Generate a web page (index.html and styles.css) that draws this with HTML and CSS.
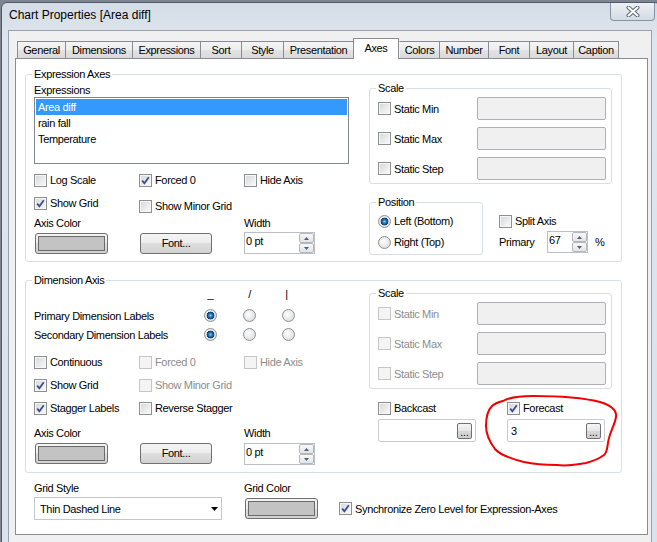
FILE: index.html
```html
<!DOCTYPE html>
<html>
<head>
<meta charset="utf-8">
<title>Chart Properties</title>
<link rel="stylesheet" href="styles.css">
</head>
<body>
<div class="win">
  <div class="titlebar">
    <span class="title">Chart Properties [Area diff]</span>
    <span class="close"><svg width="14" height="11" viewBox="0 0 14 11"><path d="M2.5 1.5 L11.5 9.5 M11.5 1.5 L2.5 9.5" stroke="#5d6673" stroke-width="4" stroke-linecap="round" fill="none"/><path d="M2.5 1.5 L11.5 9.5 M11.5 1.5 L2.5 9.5" stroke="#ffffff" stroke-width="2" stroke-linecap="round" fill="none"/></svg></span>
  </div>
  <div class="client">
    <div class="tabs">
      <div class="tab t-general">General</div>
      <div class="tab t-dims">Dimensions</div>
      <div class="tab t-exprs">Expressions</div>
      <div class="tab t-sort">Sort</div>
      <div class="tab t-style">Style</div>
      <div class="tab t-pres">Presentation</div>
      <div class="tab sel t-axes">Axes</div>
      <div class="tab t-colors">Colors</div>
      <div class="tab t-number">Number</div>
      <div class="tab t-font">Font</div>
      <div class="tab t-layout">Layout</div>
      <div class="tab last t-caption">Caption</div>
    </div>
    <div class="panel">
      <fieldset class="grp">
        <legend>Expression Axes</legend>
        <div class="cols">
          <div class="col-l">
            <div class="lbl exlbl">Expressions</div>
            <div class="list">
              <div class="item sel">Area diff</div>
              <div class="item">rain fall</div>
              <div class="item">Temperature</div>
            </div>
            <div class="row3 er1">
              <div class="chk"><span class="cb"></span>Log Scale</div>
              <div class="chk"><span class="cb"><svg width="11" height="11" viewBox="0 0 11 11"><path d="M2.2 5.6 L4.4 8.3 L8.8 2.2" stroke="#3b4e8e" stroke-width="1.8" fill="none"/></svg></span>Forced 0</div>
              <div class="chk"><span class="cb"></span>Hide Axis</div>
            </div>
            <div class="row3 er2">
              <div class="chk"><span class="cb"><svg width="11" height="11" viewBox="0 0 11 11"><path d="M2.2 5.6 L4.4 8.3 L8.8 2.2" stroke="#3b4e8e" stroke-width="1.8" fill="none"/></svg></span>Show Grid</div>
              <div class="chk low"><span class="cb"></span>Show Minor Grid</div>
            </div>
            <div class="row3 elabels">
              <div>Axis Color</div>
              <div></div>
              <div>Width</div>
            </div>
            <div class="ctrls ectrls">
              <div class="cbtn"><span></span></div>
              <div class="btn">Font...</div>
              <div class="spin w71">
                <span class="val">0 pt</span>
                <span class="arrows">
                  <span class="ab"><svg width="5" height="3" viewBox="0 0 5 3"><path d="M0 3 L2.5 0 L5 3 Z" fill="#4b5f80"/></svg></span>
                  <span class="ab"><svg width="5" height="3" viewBox="0 0 5 3"><path d="M0 0 L2.5 3 L5 0 Z" fill="#4b5f80"/></svg></span>
                </span>
              </div>
            </div>
          </div>
          <div class="col-r">
            <fieldset class="grp scale">
              <legend>Scale</legend>
              <div class="sgrid">
                <div class="chk"><span class="cb"></span>Static Min</div>
                <div class="tb"></div>
                <div class="chk"><span class="cb"></span>Static Max</div>
                <div class="tb"></div>
                <div class="chk"><span class="cb"></span>Static Step</div>
                <div class="tb"></div>
              </div>
            </fieldset>
            <div class="posrow">
              <fieldset class="grp pos">
                <legend>Position</legend>
                <div class="chk rad1"><span class="rb on"></span>Left (Bottom)</div>
                <div class="chk rad2"><span class="rb"></span>Right (Top)</div>
              </fieldset>
              <div class="split">
                <div class="chk splitchk"><span class="cb"></span>Split Axis</div>
                <div class="prim">
                  <span>Primary</span>
                  <div class="spin w41">
                    <span class="val">67</span>
                    <span class="arrows">
                      <span class="ab"><svg width="5" height="3" viewBox="0 0 5 3"><path d="M0 3 L2.5 0 L5 3 Z" fill="#4b5f80"/></svg></span>
                      <span class="ab"><svg width="5" height="3" viewBox="0 0 5 3"><path d="M0 0 L2.5 3 L5 0 Z" fill="#4b5f80"/></svg></span>
                    </span>
                  </div>
                  <span class="pct">%</span>
                </div>
              </div>
            </div>
          </div>
        </div>
      </fieldset>

      <fieldset class="grp dim">
        <legend>Dimension Axis</legend>
        <div class="cols">
          <div class="col-l">
            <div class="rgrid">
              <div></div>
              <div class="hd">_</div>
              <div class="hd">/</div>
              <div class="hd bar">|</div>
              <div>Primary Dimension Labels</div>
              <span class="rb on"></span>
              <span class="rb"></span>
              <span class="rb"></span>
              <div>Secondary Dimension Labels</div>
              <span class="rb on"></span>
              <span class="rb"></span>
              <span class="rb"></span>
            </div>
            <div class="row3 dr1">
              <div class="chk"><span class="cb"></span>Continuous</div>
              <div class="chk dis"><span class="cb"></span>Forced 0</div>
              <div class="chk dis"><span class="cb"></span>Hide Axis</div>
            </div>
            <div class="row3 dr2">
              <div class="chk"><span class="cb"><svg width="11" height="11" viewBox="0 0 11 11"><path d="M2.2 5.6 L4.4 8.3 L8.8 2.2" stroke="#3b4e8e" stroke-width="1.8" fill="none"/></svg></span>Show Grid</div>
              <div class="chk dis"><span class="cb"></span>Show Minor Grid</div>
            </div>
            <div class="row3 dr2">
              <div class="chk"><span class="cb"><svg width="11" height="11" viewBox="0 0 11 11"><path d="M2.2 5.6 L4.4 8.3 L8.8 2.2" stroke="#3b4e8e" stroke-width="1.8" fill="none"/></svg></span>Stagger Labels</div>
              <div class="chk"><span class="cb"></span>Reverse Stagger</div>
            </div>
            <div class="row3 dlabels">
              <div>Axis Color</div>
              <div></div>
              <div>Width</div>
            </div>
            <div class="ctrls dctrls">
              <div class="cbtn"><span></span></div>
              <div class="btn">Font...</div>
              <div class="spin w71">
                <span class="val">0 pt</span>
                <span class="arrows">
                  <span class="ab"><svg width="5" height="3" viewBox="0 0 5 3"><path d="M0 3 L2.5 0 L5 3 Z" fill="#4b5f80"/></svg></span>
                  <span class="ab"><svg width="5" height="3" viewBox="0 0 5 3"><path d="M0 0 L2.5 3 L5 0 Z" fill="#4b5f80"/></svg></span>
                </span>
              </div>
            </div>
          </div>
          <div class="col-r">
            <fieldset class="grp scale dscale">
              <legend>Scale</legend>
              <div class="sgrid">
                <div class="chk dis"><span class="cb"></span>Static Min</div>
                <div class="tb"></div>
                <div class="chk dis"><span class="cb"></span>Static Max</div>
                <div class="tb"></div>
                <div class="chk dis"><span class="cb"></span>Static Step</div>
                <div class="tb"></div>
              </div>
            </fieldset>
            <div class="cast">
              <div class="chk"><span class="cb"></span>Backcast</div>
              <div class="chk"><span class="cb"><svg width="11" height="11" viewBox="0 0 11 11"><path d="M2.2 5.6 L4.4 8.3 L8.8 2.2" stroke="#3b4e8e" stroke-width="1.8" fill="none"/></svg></span>Forecast</div>
              <div class="ctb"><span></span><span class="eb">...</span></div>
              <div class="ctb"><span>3</span><span class="eb">...</span></div>
            </div>
          </div>
        </div>
      </fieldset>

      <div class="bottom">
        <div>Grid Style</div>
        <div>Grid Color</div>
        <div></div>
        <div class="dd"><span>Thin Dashed Line</span><svg width="7" height="4" viewBox="0 0 7 4"><path d="M0 0 L7 0 L3.5 4 Z" fill="#000"/></svg></div>
        <div class="cbtn"><span></span></div>
        <div class="chk sync"><span class="cb"><svg width="11" height="11" viewBox="0 0 11 11"><path d="M2.2 5.6 L4.4 8.3 L8.8 2.2" stroke="#3b4e8e" stroke-width="1.8" fill="none"/></svg></span>Synchronize Zero Level for Expression-Axes</div>
      </div>
    </div>
  </div>
</div>
<svg class="mark" width="657" height="542" viewBox="0 0 657 542"><path d="M 503 401 C 510 397, 520 396, 533 396 C 555 396, 580 397, 600 402 C 610 405, 617 410, 616 417 C 615 424, 611 430, 609 438 C 607 445, 608 452, 604 455 C 600 458, 594 461, 586 463 C 575 465, 565 466, 557 465 C 545 465, 533 464, 524 462 C 512 459, 500 455, 495 449 C 489 441, 486 433, 486 426 C 486 418, 487 411, 492 406 C 495 403, 499 402, 503 401 Z" fill="none" stroke="#f00000" stroke-width="2"/></svg>
</body>
</html>
```
FILE: styles.css
```css
* { box-sizing: border-box; }
html, body { margin: 0; padding: 0; overflow: hidden; }
body {
  width: 657px;
  height: 542px;
  background: #7d8591;
  font-family: "Liberation Sans", Arial, sans-serif;
  font-size: 11px;
  line-height: 14px;
  letter-spacing: -0.35px;
  color: #000;
}

.win {
  width: 660px;
  height: 560px;
  margin: 2px 0 0 1px;
  border: 1px solid #4f5a6b;
  border-radius: 6px 6px 0 0;
  background: linear-gradient(#d3dce6, #e0e6ed 40px, #dbe2e9);
  display: flex;
  flex-direction: column;
}
.titlebar {
  height: 27px;
  display: flex;
  align-items: flex-start;
  flex: none;
}
.title {
  font-size: 12px;
  letter-spacing: 0;
  line-height: 24px;
  padding-left: 7px;
}
.close {
  margin-left: auto;
  margin-right: 5px;
  width: 45px;
  height: 18px;
  border: 1px solid #8792a2;
  border-top: none;
  border-radius: 0 0 4px 4px;
  background: linear-gradient(#edf1f5, #d2dae3);
  display: flex;
  align-items: center;
  justify-content: center;
}

.client {
  flex: 1;
  margin: 0 8px 0 6px;
  background: #f0f0f0;
  border: 1px solid #96a1b0;
  padding: 7px 0 0 6px;
}

.tabs {
  display: flex;
  align-items: flex-end;
  height: 21px;
  margin: 0 0 -1px 2px;
  position: relative;
  z-index: 1;
}
.tab {
  height: 17px;
  margin-bottom: 1px;
  border: 1px solid #898c95;
  border-bottom: none;
  border-right: none;
  background: linear-gradient(#f4f4f4, #ededed 50%, #e3e3e3 50%, #dadada);
  text-align: center;
  line-height: 16px;
  white-space: nowrap;
}
.tab.last { border-right: 1px solid #898c95; }
.tab.sel {
  height: 21px;
  margin-bottom: 0;
  background: #fff;
  border-right: 1px solid #898c95;
  line-height: 18px;
}
.tab.sel + .tab { border-left-color: #f4f4f4; }
.t-general { width: 48px; }
.t-dims { width: 67px; }
.t-exprs { width: 68px; }
.t-sort { width: 41px; }
.t-style { width: 42px; }
.t-pres { width: 70px; }
.t-axes { width: 46px; }
.t-colors { width: 40px; }
.t-number { width: 49px; }
.t-font { width: 41px; }
.t-layout { width: 44px; }
.t-caption { width: 46px; }

.panel {
  width: 633px;
  height: 477px;
  border: 1px solid #898c95;
  background: #fff;
  padding: 8px 0 0 9px;
}

fieldset.grp {
  width: 597px;
  margin: 0;
  padding: 0 9px 0 8px;
  border: 1px solid #d5dfe5;
  border-radius: 3px;
  min-width: 0;
}
legend {
  padding: 0 2px;
  margin-left: -2px;
  line-height: 14px;
}
.cols { display: flex; }
.col-l { width: 335px; padding-bottom: 7px; }
.col-r { width: 243px; }

.lbl { height: 14px; }
.exlbl { margin-top: 2px; }
.list {
  width: 315px;
  height: 67px;
  border: 1px solid #828790;
  padding: 1px;
}
.item { height: 16px; line-height: 16px; padding-left: 2px; }
.item.sel { background: #3399ff; color: #fff; }

.row3 {
  display: grid;
  grid-template-columns: 105px 105px 105px;
  height: 14px;
  white-space: nowrap;
}
.er1 { margin-top: 9px; }
.er2 { margin-top: 9px; }
.elabels { margin-top: 6px; }
.ectrls { margin-top: 2px; }
.low { margin-top: 3px; }

.chk {
  display: flex;
  align-items: center;
  gap: 3px;
  height: 14px;
  white-space: nowrap;
}
.cb {
  flex: none;
  width: 13px;
  height: 13px;
  border: 1px solid #8e8f8f;
  background: linear-gradient(135deg, #d4d6d9, #fbfbfb);
  box-shadow: inset 0 0 0 1px #f6f6f6;
  display: flex;
}
.cb svg { display: block; }
.dis { color: #8d8d8d; }
.dis .cb {
  border-color: #c6c6c6;
  background: #f4f4f4;
  box-shadow: none;
}
.rb {
  flex: none;
  width: 13px;
  height: 13px;
  border-radius: 50%;
  border: 1px solid #8e8f8f;
  background: radial-gradient(circle at 40% 40%, #ffffff, #d2d4d7);
}
.rb.on {
  background:
    radial-gradient(circle at 50% 50%, #7fd0f7 0, #2a82c6 1.6px, #154f8c 3px, #0f3a68 3.6px, rgba(15,58,104,0) 4.2px),
    radial-gradient(circle at 40% 40%, #ffffff, #d2d4d7);
}

.ctrls {
  display: grid;
  grid-template-columns: 105px 105px 105px;
  height: 22px;
  align-items: start;
}
.cbtn {
  width: 73px;
  height: 21px;
  margin: 1px 0 0 1px;
  border: 1px solid #707070;
  border-radius: 3px;
  background: linear-gradient(#f4f4f4, #ececec 50%, #dedede 50%, #d2d2d2);
  padding: 2px;
}
.cbtn span {
  display: block;
  height: 100%;
  border: 1px solid #6a6a6a;
  background: #c3c3c3;
}
.btn {
  width: 72px;
  height: 21px;
  margin: 1px 0 0 1px;
  border: 1px solid #707070;
  border-radius: 3px;
  background: linear-gradient(#f4f4f4, #ececec 50%, #dedede 50%, #d2d2d2);
  text-align: center;
  line-height: 19px;
}
.spin {
  height: 22px;
  border: 1px solid #bcc0c6;
  background: #fff;
  display: flex;
}
.w71 { width: 71px; }
.w41 { width: 41px; }
.spin .val { padding: 1px 0 0 1px; flex: 1; }
.arrows {
  width: 15px;
  display: flex;
  flex-direction: column;
}
.ab {
  height: 10px;
  border: 1px solid #b4b7bc;
  border-radius: 2px;
  background: linear-gradient(#f8f8f8, #e2e4e7);
  display: flex;
  align-items: center;
  justify-content: center;
}
.ab svg { display: block; }

fieldset.grp.scale {
  width: 243px;
  padding: 0 6px 3px 8px;
}
.sgrid {
  display: grid;
  grid-template-columns: 99px 129px;
  grid-auto-rows: 23px;
  row-gap: 7px;
  margin-top: 2px;
  align-items: center;
}
.tb {
  height: 23px;
  border: 1px solid #adb1b6;
  border-radius: 2px;
  background: #f0f0f0;
}

.posrow { display: flex; margin-top: 11px; }
fieldset.grp.pos {
  width: 114px;
  padding: 0 6px 5px 8px;
}
.rad1 { margin-top: 5px; }
.rad2 { margin-top: 7px; }
.split { margin-left: 16px; }
.splitchk { margin-top: 19px; }
.prim {
  display: grid;
  grid-template-columns: 48px 41px auto;
  align-items: center;
  margin-top: 3px;
}
.pct { margin-left: 7px; }

fieldset.grp.dim { margin-top: 11px; }
.rgrid {
  display: grid;
  grid-template-columns: 144px 13px 13px 13px;
  grid-template-rows: 22px 19px 14px;
  column-gap: 26px;
  align-items: start;
  white-space: nowrap;
}
.hd { justify-self: center; line-height: 14px; }
.hd.bar { margin-right: 4px; }
.dr1 { margin-top: 13px; }
.dr2 { margin-top: 9px; }
.dlabels { margin-top: 11px; }
.dctrls { margin-top: 3px; }
.dctrls .cbtn, .dctrls .btn { margin-top: 0; }
fieldset.grp.dscale { margin-top: -1px; }

.cast {
  display: grid;
  grid-template-columns: 98px 98px;
  column-gap: 31px;
  row-gap: 4px;
  padding-left: 9px;
  margin-top: 12px;
}
.ctb {
  height: 23px;
  border: 1px solid #c9ccd1;
  border-radius: 2px;
  background: #fff;
  display: flex;
  align-items: center;
  justify-content: space-between;
  padding: 0 3px 0 3px;
}
.eb {
  width: 15px;
  height: 16px;
  border: 1px solid #707070;
  border-radius: 2px;
  background: linear-gradient(#f6f6f6, #e6e6e6 50%, #d8d8d8 50%, #cdcdcd);
  font-size: 10px;
  letter-spacing: 0;
  line-height: 17px;
  text-align: center;
}

.bottom {
  display: grid;
  grid-template-columns: 210px 95px auto;
  row-gap: 2px;
  margin: 8px 0 0 9px;
  align-items: start;
}
.dd {
  width: 188px;
  height: 23px;
  border: 1px solid #c4c7cc;
  background: #fff;
  display: flex;
  align-items: center;
  justify-content: space-between;
  padding: 0 3px 0 5px;
}
.sync { align-self: center; }

.mark {
  position: absolute;
  left: 0;
  top: 0;
  pointer-events: none;
}
```
